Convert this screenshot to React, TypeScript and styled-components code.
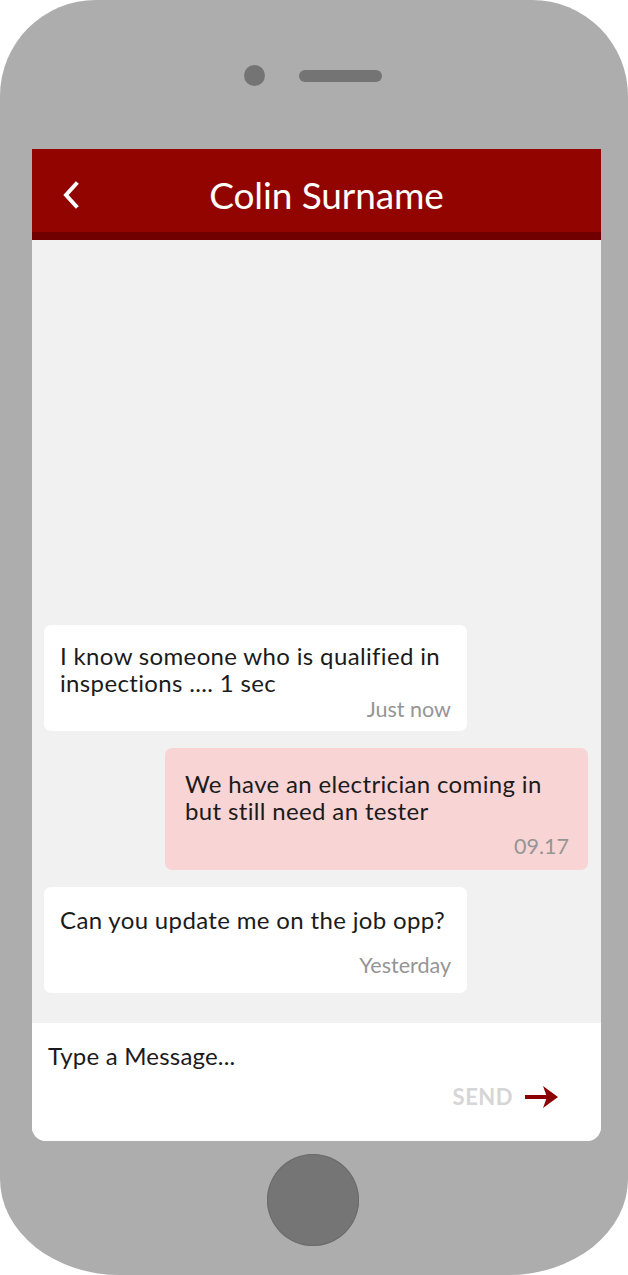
import React from "react";
import styled, { createGlobalStyle } from "styled-components";

const Global = createGlobalStyle`
  html, body { margin: 0; padding: 0; background: #ffffff; }
  body { font-family: Lato, "Open Sans", sans-serif; }
`;

const Phone = styled.div`
  width: 628px;
  height: 1275px;
  box-sizing: border-box;
  background: #adadad;
  border-radius: 96px 96px 120px 120px / 96px 96px 96px 96px;
  display: flex;
  flex-direction: column;
  padding: 0 27px 0 32px;
`;

const TopBezel = styled.div`
  height: 149px;
  flex: none;
  display: flex;
  align-items: center;
  justify-content: center;
  gap: 34px;
  padding-right: 8px;
  padding-top: 2px;
  box-sizing: border-box;
`;

const Camera = styled.div`
  width: 21px;
  height: 21px;
  border-radius: 50%;
  background: #747474;
`;

const Speaker = styled.div`
  width: 83px;
  height: 12px;
  border-radius: 6px;
  background: #747474;
`;

const Screen = styled.div`
  width: 569px;
  height: 992px;
  flex: none;
  display: flex;
  flex-direction: column;
  border-radius: 0 0 14px 14px;
  overflow: hidden;
  background: #f1f1f1;
`;

const Header = styled.header`
  height: 91px;
  box-sizing: border-box;
  flex: none;
  background: #920400;
  border-bottom: 8px solid #700000;
  display: flex;
  align-items: center;
  padding: 8px 28px 0 30px;
`;

const BackButton = styled.button`
  border: 0;
  padding: 0;
  background: none;
  width: 18px;
  height: 28px;
  display: flex;
  cursor: pointer;
`;

const Title = styled.h1`
  flex: 1;
  margin: 0;
  text-align: center;
  color: #ffffff;
  font-family: Lato, sans-serif;
  font-weight: 400;
  font-size: 37px;
  line-height: 44px;
  letter-spacing: -0.1px;
`;

const Chat = styled.div`
  flex: 1;
  display: flex;
  flex-direction: column;
  justify-content: flex-end;
  gap: 17px;
  padding: 0 13px 30px 12px;
`;

const Bubble = styled.div<{ $mine?: boolean; $pt: number; $pb: number }>`
  width: 423px;
  box-sizing: border-box;
  align-self: ${(p) => (p.$mine ? "flex-end" : "flex-start")};
  background: ${(p) => (p.$mine ? "#f8d4d4" : "#ffffff")};
  border-radius: 7px;
  padding: ${(p) => p.$pt}px ${(p) => (p.$mine ? 19 : 16)}px ${(p) => p.$pb}px
    ${(p) => (p.$mine ? 20 : 16)}px;
  display: flex;
  flex-direction: column;
`;

const MessageText = styled.p`
  margin: 0;
  color: #1b1b1b;
  font-family: Lato, sans-serif;
  font-size: 24px;
  line-height: 27px;
  letter-spacing: 0.35px;
`;

const Time = styled.span<{ $gap: number }>`
  align-self: flex-end;
  margin-top: ${(p) => p.$gap}px;
  color: #959595;
  font-family: Lato, sans-serif;
  font-size: 21.5px;
  line-height: 26px;
`;

const Composer = styled.div`
  height: 118px;
  flex: none;
  background: #ffffff;
  box-sizing: border-box;
  padding: 19px 43px 0 16px;
  display: flex;
  flex-direction: column;
`;

const Input = styled.div`
  color: #1b1b1b;
  font-family: Lato, sans-serif;
  font-size: 24px;
  line-height: 28px;
  letter-spacing: 0.2px;
`;

const SendRow = styled.div`
  display: flex;
  align-self: flex-end;
  align-items: center;
  gap: 12px;
  margin-top: 14px;
`;

const SendLabel = styled.span`
  color: #d6d6d6;
  font-family: Lato, sans-serif;
  font-weight: 700;
  font-size: 22px;
  line-height: 26px;
  letter-spacing: 0.5px;
`;

const BottomBezel = styled.div`
  flex: 1;
  display: flex;
  align-items: center;
  justify-content: center;
  padding: 0 8px 16px 0;
`;

const HomeButton = styled.div`
  width: 92px;
  height: 92px;
  border-radius: 50%;
  background: #757575;
  box-shadow: inset 0 0 0 1px #6c6c6c;
`;

const ChevronLeft = () => (
  <svg width="18" height="28" viewBox="0 0 18 28" fill="none">
    <polyline
      points="14,3 4,14 14,25"
      stroke="#ffffff"
      strokeWidth="4"
      strokeLinecap="square"
      strokeLinejoin="miter"
    />
  </svg>
);

const SendArrow = () => (
  <svg width="33" height="22" viewBox="0 0 33 22">
    <rect x="0" y="9" width="24" height="4" fill="#8b0000" />
    <path d="M18 0 L33 11 L18 22 L22 11 Z" fill="#8b0000" />
  </svg>
);

const messages = [
  {
    text: "I know someone who is qualified in inspections .... 1 sec",
    time: "Just now",
    mine: false,
    pt: 17,
    gap: 0,
    pb: 9,
  },
  {
    text: "We have an electrician coming in but still need an tester",
    time: "09.17",
    mine: true,
    pt: 22,
    gap: 9,
    pb: 11,
  },
  {
    text: "Can you update me on the job opp?",
    time: "Yesterday",
    mine: false,
    pt: 19,
    gap: 19,
    pb: 15,
  },
];

export default function App() {
  return (
    <>
      <Global />
      <Phone>
        <TopBezel>
          <Camera />
          <Speaker />
        </TopBezel>
        <Screen>
          <Header>
            <BackButton aria-label="Back">
              <ChevronLeft />
            </BackButton>
            <Title>Colin Surname</Title>
          </Header>
          <Chat>
            {messages.map((m) => (
              <Bubble key={m.time} $mine={m.mine} $pt={m.pt} $pb={m.pb}>
                <MessageText>{m.text}</MessageText>
                <Time $gap={m.gap}>{m.time}</Time>
              </Bubble>
            ))}
          </Chat>
          <Composer>
            <Input>Type a Message...</Input>
            <SendRow>
              <SendLabel>SEND</SendLabel>
              <SendArrow />
            </SendRow>
          </Composer>
        </Screen>
        <BottomBezel>
          <HomeButton />
        </BottomBezel>
      </Phone>
    </>
  );
}
